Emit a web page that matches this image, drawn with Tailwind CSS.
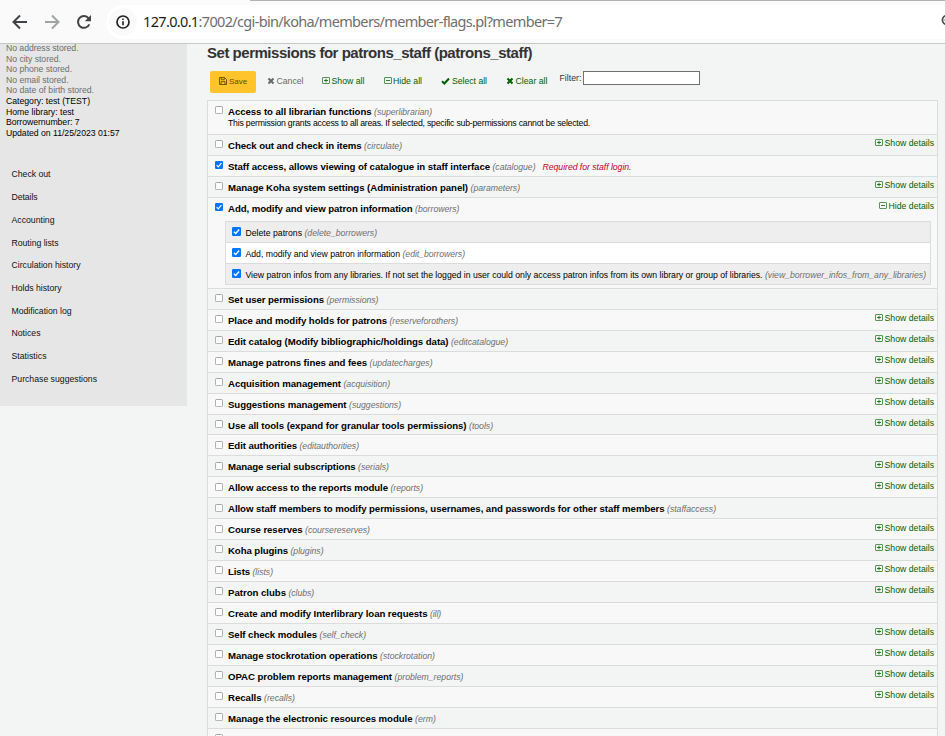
<!DOCTYPE html>
<html lang="en">
<head>
<meta charset="utf-8">
<title>Set permissions</title>
<script src="https://cdn.jsdelivr.net/npm/@tailwindcss/browser@4"></script>
</head>
<body class="w-[945px] h-[736px] overflow-hidden bg-[#f3f5f4] text-black font-['Liberation_Sans',Arial,sans-serif] text-[8.7px] leading-[11px]">
<svg class="hidden">
  <symbol id="plus" viewBox="0 0 8 8"><rect x=".5" y=".5" width="7" height="6" rx=".5" fill="none" stroke="currentColor" stroke-width=".65"/><path d="M2 3.500h4M4 1.700v3.600" stroke="currentColor" stroke-width=".8"/></symbol>
  <symbol id="minus" viewBox="0 0 8 8"><rect x=".5" y=".5" width="7" height="6" rx=".5" fill="none" stroke="currentColor" stroke-width=".65"/><path d="M2 3.500h4" stroke="currentColor" stroke-width=".8"/></symbol>
  <symbol id="cross" viewBox="0 0 8 8"><path d="M1.500 1.500l5 5M6.500 1.500l-5 5" stroke="currentColor" stroke-width="2.100"/></symbol>
  <symbol id="tick" viewBox="0 0 9 8"><path d="M1 4.2l2.4 2.3L8 1.5" fill="none" stroke="currentColor" stroke-width="2"/></symbol>
  <symbol id="off" viewBox="0 0 8 8"><rect x=".4" y=".5" width="7.200" height="7.200" rx="1.2" fill="#fff" stroke="#8b8b8b" stroke-width=".75"/></symbol>
  <symbol id="on" viewBox="0 0 8 8"><rect width="8" height="8" rx="1.2" fill="#0075ff"/><path d="M1.7 4.2l1.6 1.6L6.4 2.2" fill="none" stroke="#fff" stroke-width="1.2"/></symbol>
</svg>

<header class="h-[44px] bg-[#fafafa] border-b border-[#c4c8c6] flex flex-col">
  <div class="h-px ml-[250px] bg-[#b2b2b2] shrink-0"></div>
  <div class="flex pt-[4px]">
    <div class="w-[106px] h-[34px] flex shrink-0">
      <svg class="w-[16px] h-[16px] ml-[12px] mt-[9px]" viewBox="0 0 16 16" fill="none" stroke="#414345" stroke-width="2"><path d="M15 8H2M8 1.5L1.5 8L8 14.500"/></svg>
      <svg class="w-[16px] h-[16px] ml-[16px] mt-[9px]" viewBox="0 0 16 16" fill="none" stroke="#a2a3a4" stroke-width="2"><path d="M1 8h13M8 1.500L14.500 8L8 14.500"/></svg>
      <svg class="w-[16px] h-[16px] ml-[16px] mt-[9px]" viewBox="0 0 16 16"><path d="M13.300 10.400A5.900 5.900 0 1 1 12.600 4.300" fill="none" stroke="#414345" stroke-width="2"/><path d="M15 1v6.300H8.800z" fill="#414345"/></svg>
    </div>
    <div class="flex-1 h-[34px] bg-white rounded-l-[17px] flex relative">
      <div class="w-[28px] h-[28px] ml-[3px] mt-[3px] rounded-full bg-[#fafafa] flex items-center justify-center shrink-0">
        <svg class="w-[14px] h-[14px]" viewBox="0 0 14 14"><circle cx="7" cy="7" r="6" fill="none" stroke="#222" stroke-width="1.700"/><path d="M7 6.300v4M7 3.500v1.600" stroke="#222" stroke-width="1.600"/></svg>
      </div>
      <div class="ml-[6px] h-[34px] leading-[33px] text-[14.500px] whitespace-nowrap font-['Noto_Sans',sans-serif] text-[#6e6e6e]" data-f="14.5px 'Noto Sans'" data-w="419"><span class="text-[#1c1c1c]">127.0.0.1</span>:7002/cgi-bin/koha/members/member-flags.pl?member=7</div>
      <svg class="absolute left-[835px] top-[9px] w-[12px] h-[12px]" viewBox="0 0 12 12" fill="none" stroke="#48494b" stroke-width="1.700"><circle cx="6" cy="6" r="4.600"/><path d="M3.500 6h5"/></svg>
    </div>
  </div>
</header>

<div class="flex">
  <aside class="w-[187px] h-[362px] bg-[#e6e6e6] shrink-0">
    <div class="pl-[6px] -mt-[1px] leading-[10.600px] text-[#6e6e6e]">
      <div data-w="72.500">No address stored.</div><div data-w="55">No city stored.</div><div data-w="66">No phone stored.</div><div data-w="62.500">No email stored.</div><div data-w="88">No date of birth stored.</div>
      <div class="text-black"><div data-w="84">Category: test (TEST)</div><div data-w="68">Home library: test</div><div data-w="73.500">Borrowernumber: 7</div><div data-w="113.500">Updated on 11/25/2023 01:57</div></div>
    </div>
    <nav id="nav" class="pl-[11.500px] pt-[31px] text-[#111]"></nav>
  </aside>

  <main class="ml-[20px] w-[731px] shrink-0">
    <h1 class="h-[20px] leading-[17px] text-[15px] font-bold text-[#333] whitespace-nowrap" data-f="bold 15px 'Liberation Sans'" data-w="325">Set permissions for patrons_staff (patrons_staff)</h1>
    <div class="h-[36px] pt-[6px] flex text-[#006100] whitespace-nowrap">
      <div class="ml-[3px] mt-px w-[46px] h-[22px] rounded-[2px] bg-[#ffc32b] flex items-center justify-center text-[#664d0a] text-[8px]">
        <svg class="w-[8px] h-[8px] -mt-[2px] mr-[2px]" viewBox="0 0 8 8" fill="none" stroke="currentColor" stroke-width=".9"><path d="M.500.500h5L7.500 2.500v5h-7zM2.300.500v2.200h3V.500M2 7.500V4.600h4v2.900"/></svg><span class="-mt-[2px]">Save</span>
      </div>
      <div class="ml-[10.500px] h-[22px] flex items-center text-[#696969]"><svg class="w-[8px] h-[8px] mr-[2px]"><use href="#cross"/></svg><span data-w="27">Cancel</span></div>
      <div class="ml-[18.500px] h-[22px] flex items-center"><svg class="w-[8px] h-[8px] mr-[1.500px]"><use href="#plus"/></svg><span data-w="33">Show all</span></div>
      <div class="ml-[19px] h-[22px] flex items-center"><svg class="w-[8px] h-[8px] mr-[1.500px]"><use href="#minus"/></svg><span data-w="29">Hide all</span></div>
      <div class="ml-[19px] h-[22px] flex items-center"><svg class="w-[9px] h-[8px] mr-[2px]"><use href="#tick"/></svg><span data-w="35">Select all</span></div>
      <div class="ml-[19px] h-[22px] flex items-center"><svg class="w-[8px] h-[8px] mr-[1.500px]"><use href="#cross"/></svg><span data-w="32">Clear all</span></div>
      <label class="ml-[12px] flex text-[#333]"><span class="mt-[3px] mr-px" data-w="22">Filter:</span><input class="w-[117px] h-[14px] mt-px bg-white border border-[#707070]"></label>
    </div>
    <div id="list" class="border-t border-x border-[#dbdddc]"></div>
  </main>
</div>

<script>
const nav = [["Check out",39],["Details",26],["Accounting",43],["Routing lists",47],["Circulation history",69],["Holds history",50],["Modification log",60],["Notices",29],["Statistics",35],["Purchase suggestions",85.5]];
const gaps = [23,23,23,22,23,23,22,23,23,23];
document.getElementById('nav').innerHTML = nav.map(([t,w],i) => `<div style="height:${gaps[i]}px"><span class="inline-block whitespace-nowrap" data-w="${w}">${t}</span></div>`).join('');

// title, code, title width, code width, row height, checkbox offset, details state, details offset
const rows = [
["Access to all librarian functions","superlibrarian",143.5,58,34,5,"",0],
["Check out and check in items","circulate",133.5,38,21,5,"show",3],
["Staff access, allows viewing of catalogue in staff interface","catalogue",262,43,21,5,"",0],
["Manage Koha system settings (Administration panel)","parameters",240,49.5,21,5,"show",3],
["Add, modify and view patron information","borrowers",184.5,44.5,91,5,"hide",3],
["Set user permissions","permissions",96,52,21,5,"",0],
["Place and modify holds for patrons","reserveforothers",159,68.5,21,5,"show",3],
["Edit catalog (Modify bibliographic/holdings data)","editcatalogue",220.5,57,21,5,"show",3],
["Manage patrons fines and fees","updatecharges",139,63,21,5,"show",3],
["Acquisition management","acquisition",113,46.5,21,5,"show",3],
["Suggestions management","suggestions",118.5,52,21,5,"show",3],
["Use all tools (expand for granular tools permissions)","tools",238.5,24,20,5,"show",3],
["Edit authorities","editauthorities",69,59.5,21,6,"",0],
["Manage serial subscriptions","serials",127.5,31,21,6,"show",4],
["Allow access to the reports module","reports",160,32.5,21,6,"show",4],
["Allow staff members to modify permissions, usernames, and passwords for other staff members","staffaccess",436.5,49,21,6,"",0],
["Course reserves","coursereserves",74.5,65,21,6,"show",4],
["Koha plugins","plugins",60,33,21,5,"show",3],
["Lists","lists",22,20.5,21,5,"show",3],
["Patron clubs","clubs",58,25.5,21,5,"show",3],
["Create and modify Interlibrary loan requests","ill",199.5,11,21,5,"",0],
["Self check modules","self_check",89,46.5,21,5,"show",3],
["Manage stockrotation operations","stockrotation",149.5,55,21,5,"show",3],
["OPAC problem reports management","problem_reports",164,69,21,5,"show",3],
["Recalls","recalls",33.5,31,21,5,"show",3],
["Manage the electronic resources module","erm",184.5,21,21,5,"",0],
["","",0,0,21,5,"",0]];
const subs = [["Delete patrons","delete_borrowers",56.5,72.5],["Add, modify and view patron information","edit_borrowers",154.5,62.5],["View patron infos from any libraries. If not set the logged in user could only access patron infos from its own library or group of libraries.","view_borrower_infos_from_any_libraries",517,161]];
const box = (on, top) => `<svg class="w-[8px] h-[8px] shrink-0" style="margin-top:${top}px"><use href="#${on?'on':'off'}"/></svg>`;
document.getElementById('list').innerHTML = rows.map(([t,c,tw,cw,h,y,d,dy],i) => `
<div class="border-b border-[#dbdddc] ${i%2?'bg-[#f3f5f4]':'bg-[#f8f8f8]'}" style="height:${h}px">
 <div class="flex pl-[7px] pr-[3px] h-[20px] whitespace-nowrap">
  ${box(i==2||i==4, y)}
  ${t?`<div class="pl-[5px] pt-[5px]">
   <div class="flex leading-[12px]"><b class="text-[9.650px] mr-[2.500px]" data-w="${tw}">${t}</b><i class="text-[#6e6e6e]" data-w="${cw}">(${c})</i>${i==2?'<i class="text-[#c00020] ml-[7px]" data-w="89">Required for staff login.</i>':''}</div>
   ${i==0?'<div data-w="362">This permission grants access to all areas. If selected, specific sub-permissions cannot be selected.</div>':''}
  </div>`:''}
  ${d?`<a class="ml-auto flex h-[11px] text-[#006100]" style="margin-top:${dy}px"><svg class="w-[8px] h-[8px] mt-[1px] mr-[1.500px]"><use href="#${d=='show'?'plus':'minus'}"/></svg><span data-w="${d=='show'?49.5:45.5}">${d=='show'?'Show details':'Hide details'}</span></a>`:''}
 </div>
 ${i==4?`<div class="ml-[17px] mt-[3px] w-[706px] border-t border-x border-[#dbdddc]">${subs.map(([t,c,a,b],j)=>`<div class="h-[21px] flex pl-[6px] border-b border-[#dbdddc] whitespace-nowrap ${j==1?'bg-white':'bg-[#eeeeee]'}"><svg class="w-[9px] h-[9px] mt-[5px] shrink-0" viewBox="0 0 8 8"><use href="#on" width="8" height="8"/></svg><span class="ml-[4.500px] mt-[6px] mr-[2.500px]" data-w="${a}">${t}</span><i class="mt-[6px] text-[#6e6e6e]" data-w="${b}">(${c})</i></div>`).join('')}</div>`:''}
</div>`).join('');

const ctx = document.createElement('canvas').getContext('2d');
const fonts = { B: "bold 9.65px 'Liberation Sans'", I: "italic 8.7px 'Liberation Sans'" };
document.querySelectorAll('[data-w]').forEach(e => {
  ctx.font = e.dataset.f || fonts[e.tagName] || "8.7px 'Liberation Sans'";
  const w = ctx.measureText(e.textContent).width;
  e.style.letterSpacing = ((+e.dataset.w - w) / e.textContent.length).toFixed(4) + 'px';
});
</script>
</body>
</html>
